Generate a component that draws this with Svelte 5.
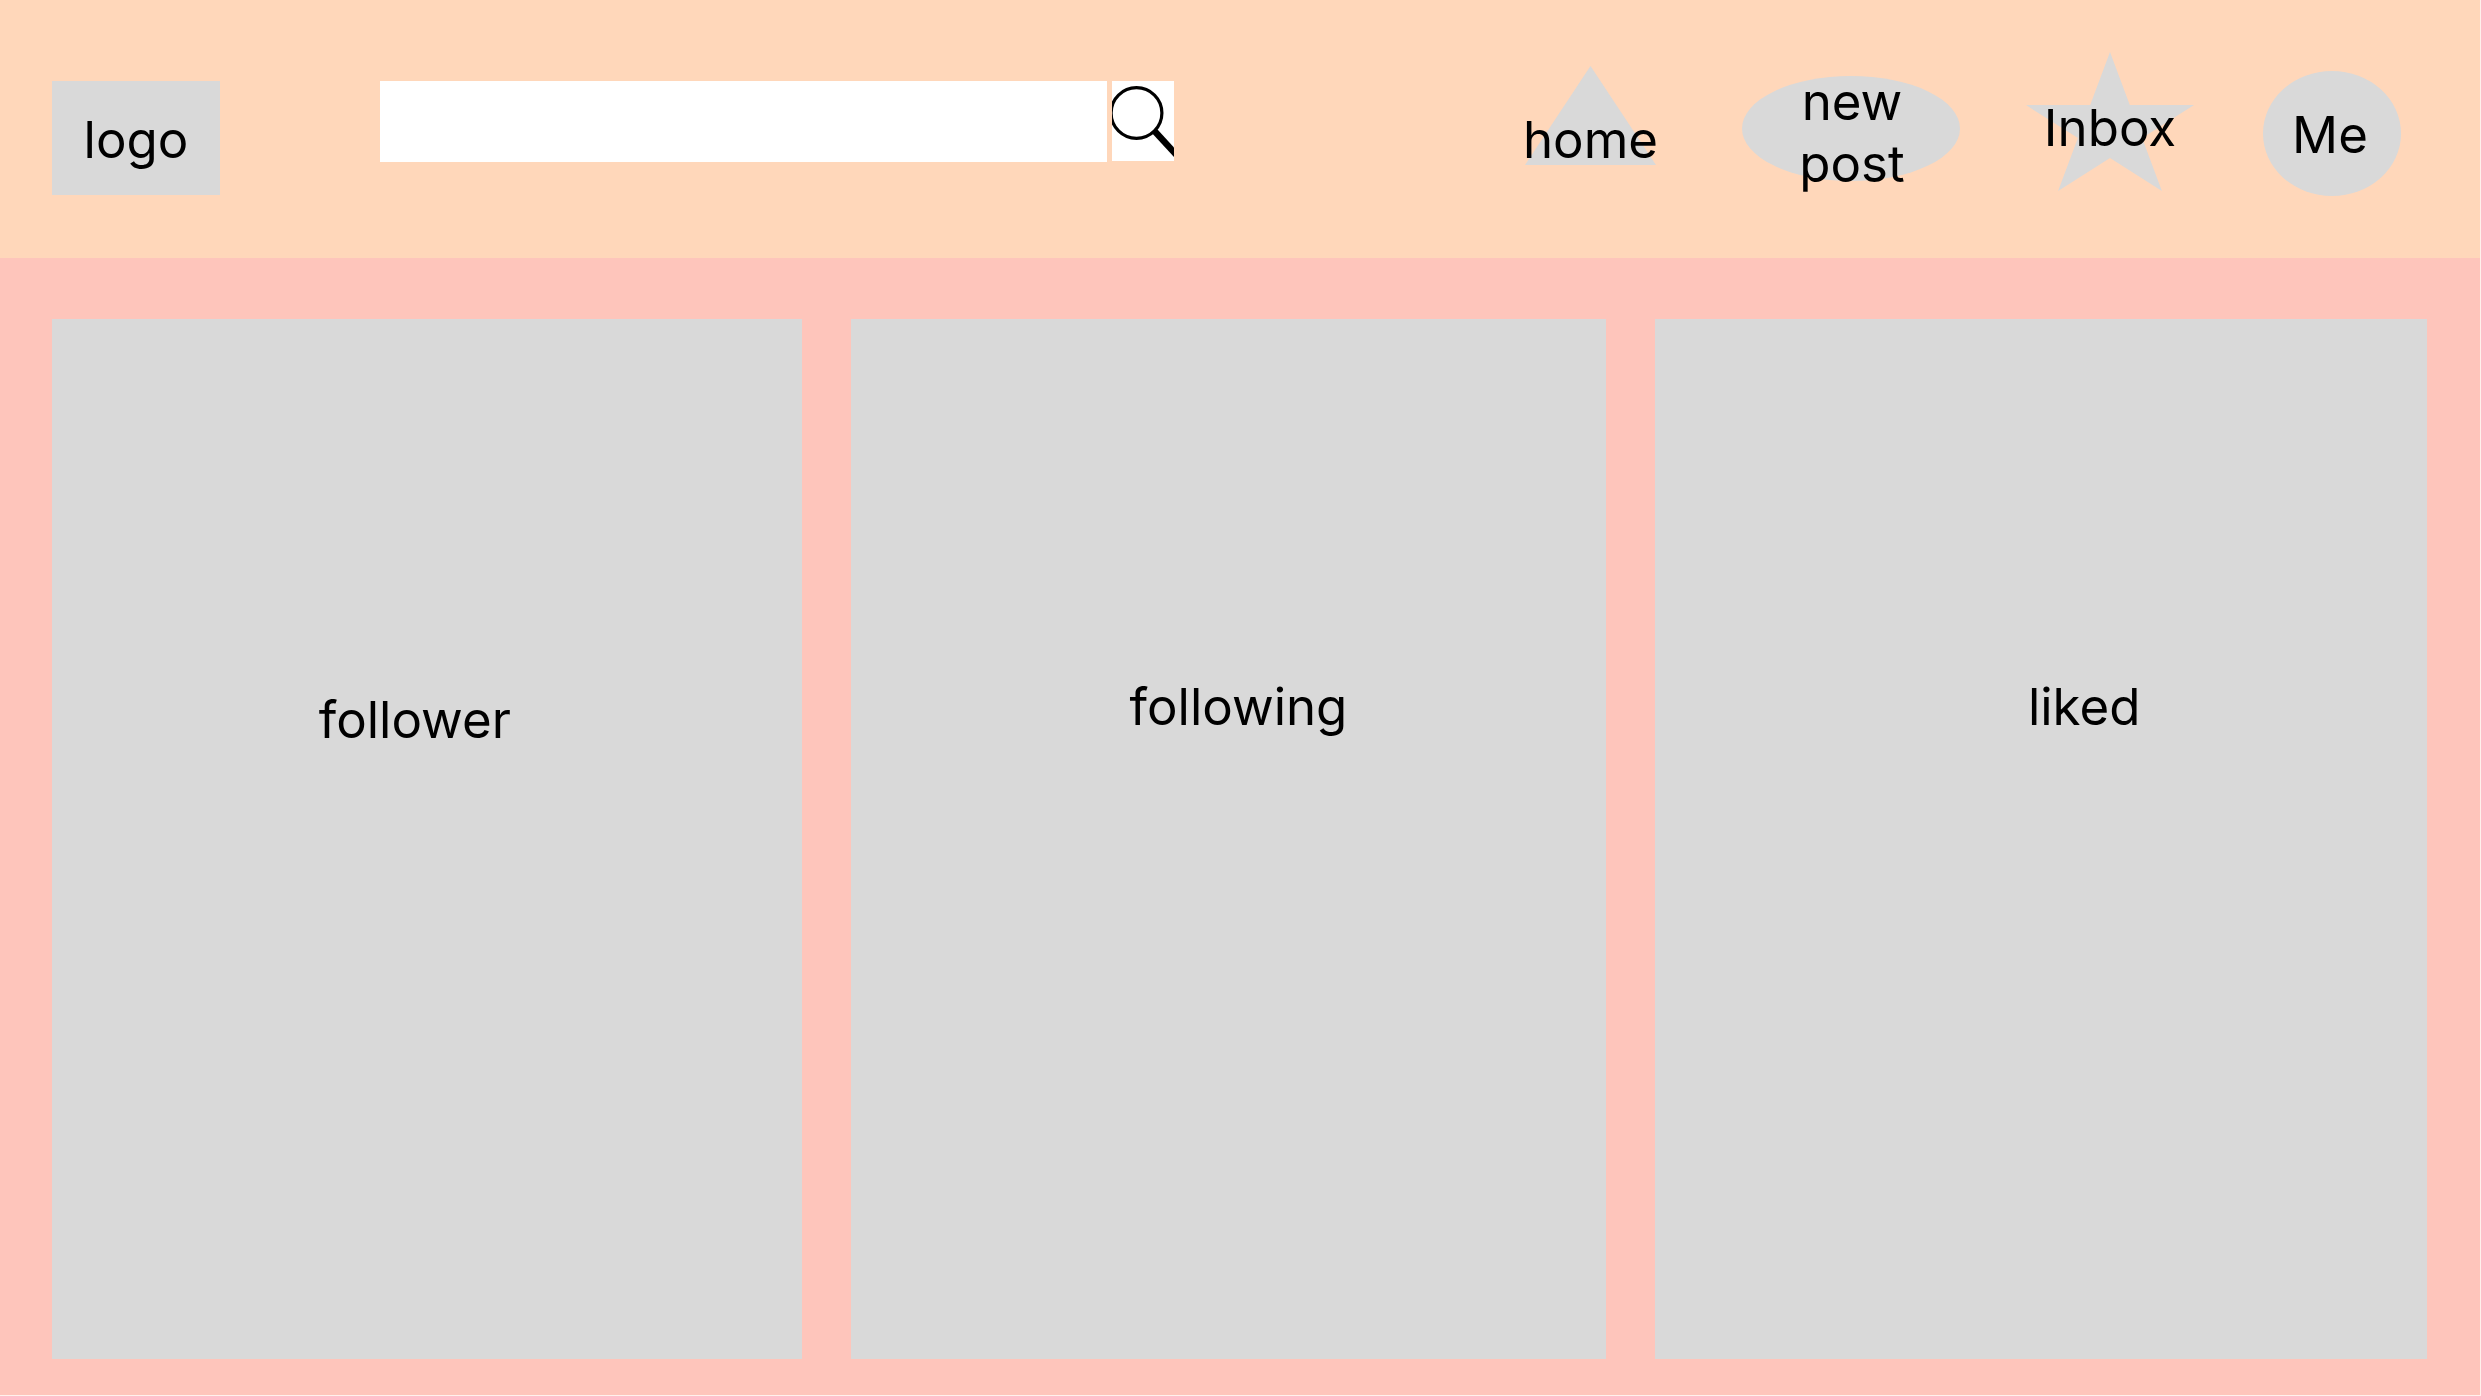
<script>
  const panels = ['follower', 'following', 'liked'];
  let query = $state('');
</script>

<div class="page">
  <header>
    <a class="logo" href="#top">logo</a>

    <form class="search" role="search" onsubmit={(e) => e.preventDefault()}>
      <input type="search" aria-label="Search" bind:value={query} />
      <button type="submit" aria-label="Submit search">
        <svg viewBox="0 0 62 80" aria-hidden="true">
          <circle cx="24.5" cy="32" r="25.4" fill="none" stroke="#000" stroke-width="3.2" />
          <path d="M42 49.500L66 75.500" stroke="#000" stroke-width="6.500" />
        </svg>
      </button>
    </form>

    <nav aria-label="Main">
      <a class="home" href="#home">
        <svg viewBox="0 0 131 99" aria-hidden="true"><path d="M65.500 0L131 99H0Z" /></svg>
        <span>home</span>
      </a>
      <a class="post" href="#new-post">
        <svg viewBox="0 0 218 105" aria-hidden="true"><ellipse cx="109" cy="52.5" rx="109" ry="52.5" /></svg>
        <span>new<br />post</span>
      </a>
      <a class="inbox" href="#inbox">
        <svg viewBox="0 0 168 139" aria-hidden="true">
          <path d="M84 0L103.800 53.100H168L116.100 85.900L135.900 139L84 106.100L32.100 139L51.900 85.900L0 53.100H64.200Z" />
        </svg>
        <span>Inbox</span>
      </a>
      <a class="me" href="#me">
        <svg viewBox="0 0 138 125" aria-hidden="true"><ellipse cx="69" cy="62.5" rx="69" ry="62.5" /></svg>
        <span>Me</span>
      </a>
    </nav>
  </header>

  <main>
    {#each panels as name}
      <section class={name}><h2>{name}</h2></section>
    {/each}
  </main>
</div>

<style>
  :global(body) {
    background: #fff1ec;
  }

  .page {
    box-sizing: border-box;
    min-height: 100vh;
    padding: 0 1px 1px 0;
    display: flex;
    flex-direction: column;
    font: 400 51px/62px Inter, sans-serif;
    color: #000;
  }

  a {
    color: inherit;
    text-decoration: none;
  }

  header {
    box-sizing: border-box;
    min-height: 258px;
    padding: 0 79px 0 52px;
    display: flex;
    align-items: flex-start;
    background: #ffd7ba;
  }

  .logo {
    flex: none;
    box-sizing: border-box;
    width: 168px;
    margin-top: 81px;
    padding: 28px 0 24px;
    text-align: center;
    background: #d9d9d9;
  }

  .search {
    flex: 0 1 794px;
    min-width: 0;
    margin: 81px 40px 0 160px;
    display: flex;
    align-items: flex-start;
    gap: 5px;
  }

  .search input {
    flex: 1;
    min-width: 0;
    box-sizing: border-box;
    height: 81px;
    padding: 0 16px;
    border: 0;
    border-radius: 0;
    appearance: none;
    background: #fff;
    font: inherit;
  }

  .search button {
    flex: none;
    width: 62px;
    height: 80px;
    padding: 0;
    border: 0;
    background: #fff;
  }

  svg {
    display: block;
    width: 100%;
    fill: #d9d9d9;
  }

  .search svg {
    overflow: hidden;
  }

  nav {
    flex: none;
    margin-left: auto;
    display: flex;
    align-items: flex-start;
  }

  nav a {
    display: grid;
    grid-template-columns: 100%;
    align-items: start;
    justify-items: center;
    text-align: center;
    white-space: nowrap;
  }

  nav svg,
  nav span {
    grid-area: 1 / 1;
  }

  .home {
    width: 131px;
    margin: 66px 86px 0 0;
  }

  .home span {
    padding-top: 43px;
  }

  .post {
    width: 218px;
    margin: 71px 66px 0 0;
  }

  .post svg {
    padding-top: 5px;
  }

  .post span {
    padding-left: 2px;
  }

  .inbox {
    width: 168px;
    margin: 52px 69px 0 0;
  }

  .inbox span {
    padding-top: 45px;
  }

  .me {
    width: 138px;
    margin-top: 71px;
  }

  .me span {
    padding-top: 33px;
    padding-right: 4px;
  }

  main {
    flex: 1;
    padding: 61px 53px 36px 52px;
    display: grid;
    grid-template-columns: 750fr 756fr 772fr;
    gap: 49px;
    background: #fec5bb;
  }

  section {
    padding-top: 357px;
    text-align: center;
    background: #d9d9d9;
  }

  .follower {
    padding-top: 370px;
    padding-right: 24px;
  }

  .following {
    padding-left: 20px;
  }

  .liked {
    padding-left: 86px;
  }

  h2 {
    margin: 0;
    font: inherit;
  }
</style>
